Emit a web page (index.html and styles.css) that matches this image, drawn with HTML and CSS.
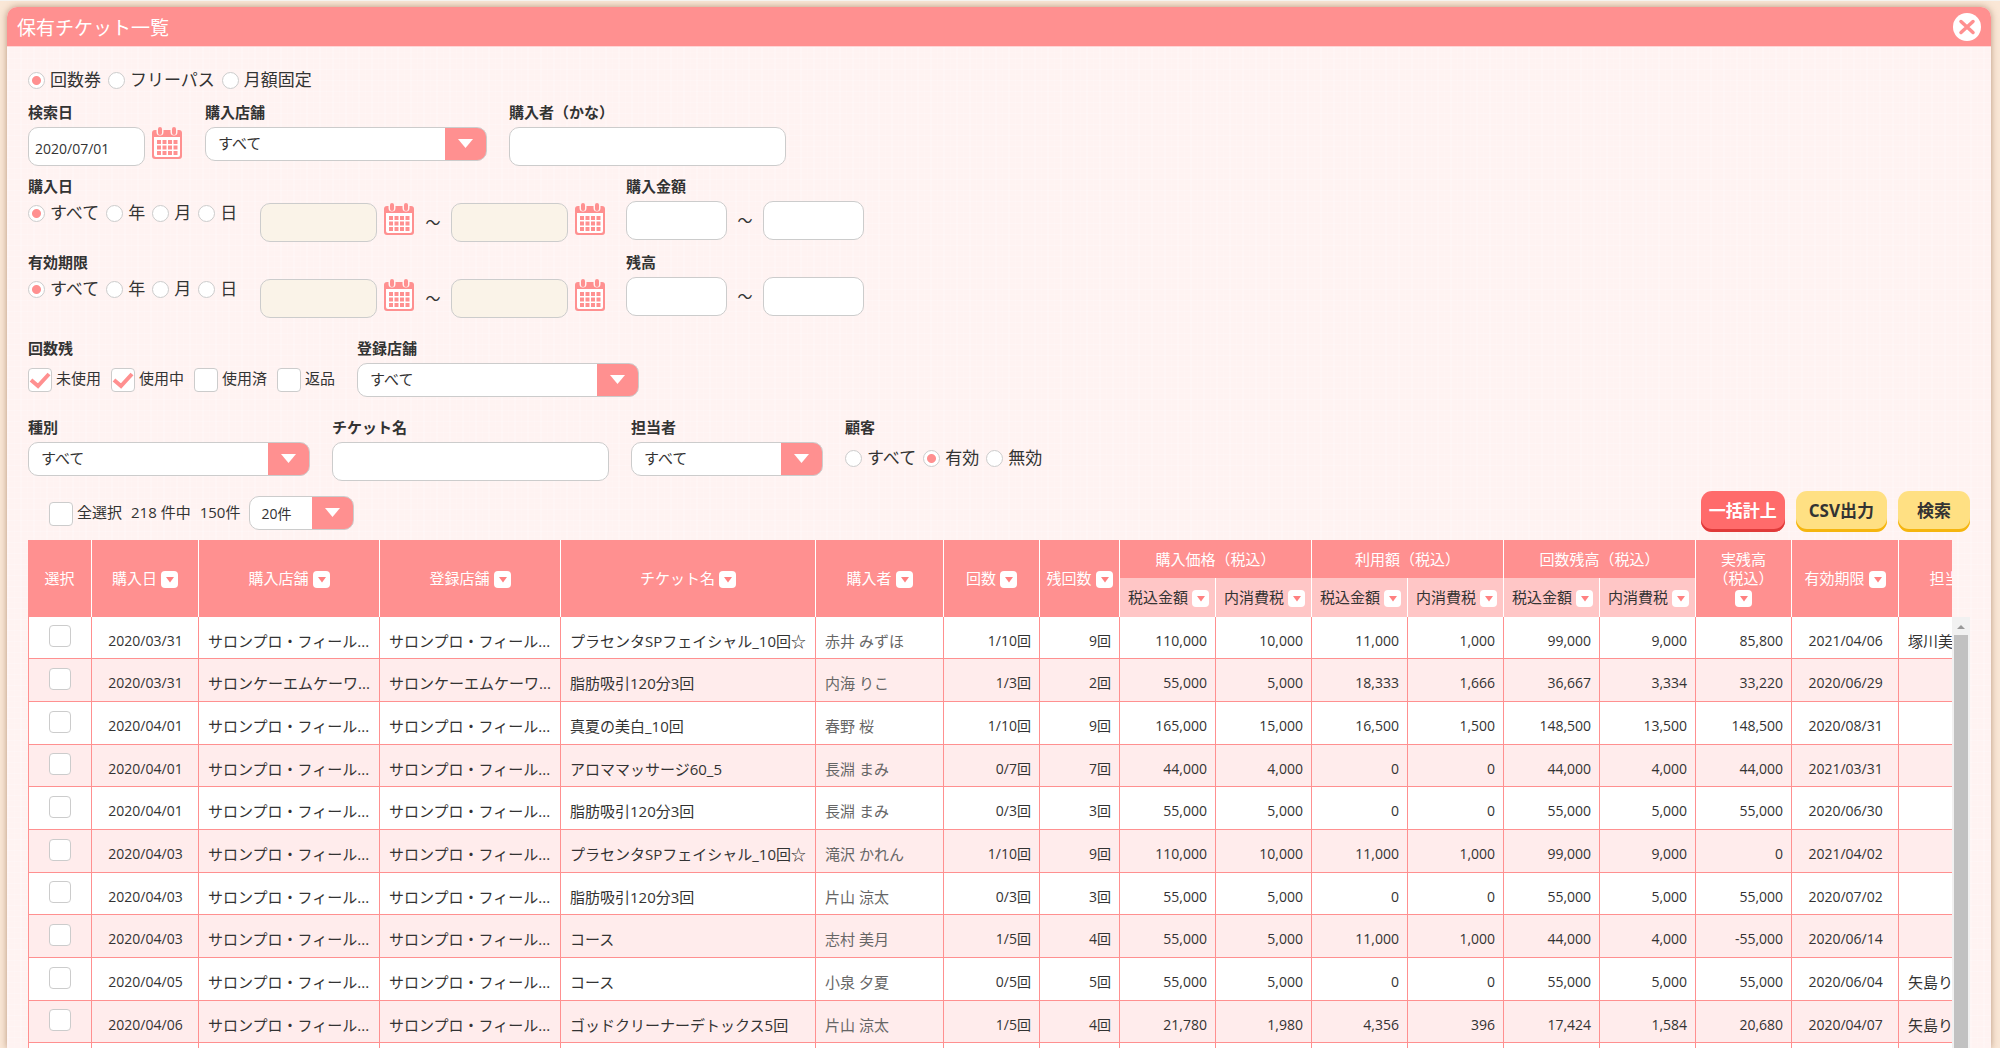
FILE: index.html
```html
<!DOCTYPE html>
<html lang="ja">
<head>
  <meta charset="UTF-8">
  <meta name="viewport" content="width=device-width, initial-scale=1.0">
  <title>保有チケット一覧</title>
  <link rel="stylesheet" href="styles.css">
</head>
<body>

<!-- shared icons -->
<svg class="defs" width="0" height="0" aria-hidden="true">
  <symbol id="icon-calendar" viewBox="0 0 32 32">
    <path fill="#ff9090" d="M4 3h24a3 3 0 0 1 3 3v23a3 3 0 0 1-3 3H4a3 3 0 0 1-3-3V6a3 3 0 0 1 3-3z"/>
    <path fill="#fff" d="M3 10h26v18a2 2 0 0 1-2 2H5a2 2 0 0 1-2-2z"/>
    <path stroke="#fff4f3" stroke-width="7" stroke-linecap="round" d="M9 3v2M23 3v2"/>
    <path stroke="#ff9090" stroke-width="4" stroke-linecap="round" d="M9 2v4M23 2v4"/>
    <path stroke="#ff9090" stroke-width="4" stroke-dasharray="4 1.500" d="M6 15h20.500M6 20.500h20.500M6 26h20.500"/>
  </symbol>
  <symbol id="icon-sort" viewBox="0 0 17 17">
    <path fill="#ff8080" d="M5 6h8l-4 5.500z"/>
  </symbol>
</svg>

<div class="modal">
  <header class="modal-header">
    <h1>保有チケット一覧</h1>
    <button type="button" class="close" aria-label="閉じる">
      <svg width="28" height="28" viewBox="0 0 28 28">
        <circle cx="14" cy="14" r="14" fill="#fff"/>
        <path d="M8 8.500l12 11M20 8.500l-12 11" stroke="#ff9090" stroke-width="3.500" stroke-linecap="round"/>
      </svg>
    </button>
  </header>

  <main class="modal-body">
    <form class="search">
      <div class="radios">
        <label><input type="radio" name="kind" checked>回数券</label>
        <label><input type="radio" name="kind">フリーパス</label>
        <label><input type="radio" name="kind">月額固定</label>
      </div>

      <div class="row">
        <div class="field">
          <label class="caption" for="searchDate">検索日</label>
          <div class="inline">
            <input type="text" class="text date" id="searchDate" value="2020/07/01">
            <button type="button" class="cal" aria-label="カレンダー"><svg><use href="#icon-calendar"/></svg></button>
          </div>
        </div>
        <div class="field">
          <label class="caption" for="buyShop">購入店舗</label>
          <select class="select" id="buyShop"><option>すべて</option></select>
        </div>
        <div class="field">
          <label class="caption" for="buyerKana">購入者（かな）</label>
          <input type="text" class="text wide" id="buyerKana">
        </div>
      </div>

      <div class="row">
        <div class="field period">
          <span class="caption">購入日</span>
          <div class="inline">
            <div class="radios">
              <label><input type="radio" name="buyDate" checked>すべて</label>
              <label><input type="radio" name="buyDate">年</label>
              <label><input type="radio" name="buyDate">月</label>
              <label><input type="radio" name="buyDate">日</label>
            </div>
            <div class="range">
              <input type="text" class="text date" aria-label="購入日 開始" disabled>
              <button type="button" class="cal" aria-label="カレンダー"><svg><use href="#icon-calendar"/></svg></button>
              <span class="tilde">～</span>
              <input type="text" class="text date" aria-label="購入日 終了" disabled>
              <button type="button" class="cal" aria-label="カレンダー"><svg><use href="#icon-calendar"/></svg></button>
            </div>
          </div>
        </div>
        <div class="field">
          <label class="caption" for="priceFrom">購入金額</label>
          <div class="inline">
            <input type="text" class="text amount" id="priceFrom">
            <span class="tilde">～</span>
            <input type="text" class="text amount" aria-label="購入金額 上限">
          </div>
        </div>
      </div>

      <div class="row">
        <div class="field period">
          <span class="caption">有効期限</span>
          <div class="inline">
            <div class="radios">
              <label><input type="radio" name="limitDate" checked>すべて</label>
              <label><input type="radio" name="limitDate">年</label>
              <label><input type="radio" name="limitDate">月</label>
              <label><input type="radio" name="limitDate">日</label>
            </div>
            <div class="range">
              <input type="text" class="text date" aria-label="有効期限 開始" disabled>
              <button type="button" class="cal" aria-label="カレンダー"><svg><use href="#icon-calendar"/></svg></button>
              <span class="tilde">～</span>
              <input type="text" class="text date" aria-label="有効期限 終了" disabled>
              <button type="button" class="cal" aria-label="カレンダー"><svg><use href="#icon-calendar"/></svg></button>
            </div>
          </div>
        </div>
        <div class="field">
          <label class="caption" for="balanceFrom">残高</label>
          <div class="inline">
            <input type="text" class="text amount" id="balanceFrom">
            <span class="tilde">～</span>
            <input type="text" class="text amount" aria-label="残高 上限">
          </div>
        </div>
      </div>

      <div class="row spaced">
        <div class="field">
          <span class="caption">回数残</span>
          <div class="checks">
            <label><input type="checkbox" class="check" checked>未使用</label>
            <label><input type="checkbox" class="check" checked>使用中</label>
            <label><input type="checkbox" class="check">使用済</label>
            <label><input type="checkbox" class="check">返品</label>
          </div>
        </div>
        <div class="field">
          <label class="caption" for="regShop">登録店舗</label>
          <select class="select" id="regShop"><option>すべて</option></select>
        </div>
      </div>

      <div class="row spaced">
        <div class="field">
          <label class="caption" for="type">種別</label>
          <select class="select" id="type"><option>すべて</option></select>
        </div>
        <div class="field">
          <label class="caption" for="ticketName">チケット名</label>
          <input type="text" class="text wide" id="ticketName">
        </div>
        <div class="field">
          <label class="caption" for="staff">担当者</label>
          <select class="select medium" id="staff"><option>すべて</option></select>
        </div>
        <div class="field customer">
          <span class="caption">顧客</span>
          <div class="radios">
            <label><input type="radio" name="customer">すべて</label>
            <label><input type="radio" name="customer" checked>有効</label>
            <label><input type="radio" name="customer">無効</label>
          </div>
        </div>
      </div>

      <div class="toolbar">
        <label class="all"><input type="checkbox" class="check">全選択</label>
        <span>218 件中</span>
        <span>150件</span>
        <select class="select small" aria-label="表示件数"><option>20件</option></select>
        <div class="buttons">
          <button type="button" class="btn red">一括計上</button>
          <button type="button" class="btn">CSV出力</button>
          <button type="button" class="btn">検索</button>
        </div>
      </div>
    </form>

    <div class="list">
      <div class="table-wrap">
        <table>
          <colgroup>
            <col class="w64"><col class="w107"><col class="w181"><col class="w181"><col class="w255"><col class="w128">
            <col class="w96"><col class="w80"><col class="w96"><col class="w96"><col class="w96"><col class="w96">
            <col class="w96"><col class="w96"><col class="w96"><col class="w107"><col class="w128">
          </colgroup>
          <thead>
            <tr>
              <th rowspan="2">選択</th>
              <th rowspan="2">購入日<button type="button" class="sort" aria-label="並び替え"><svg><use href="#icon-sort"/></svg></button></th>
              <th rowspan="2">購入店舗<button type="button" class="sort" aria-label="並び替え"><svg><use href="#icon-sort"/></svg></button></th>
              <th rowspan="2">登録店舗<button type="button" class="sort" aria-label="並び替え"><svg><use href="#icon-sort"/></svg></button></th>
              <th rowspan="2">チケット名<button type="button" class="sort" aria-label="並び替え"><svg><use href="#icon-sort"/></svg></button></th>
              <th rowspan="2">購入者<button type="button" class="sort" aria-label="並び替え"><svg><use href="#icon-sort"/></svg></button></th>
              <th rowspan="2">回数<button type="button" class="sort" aria-label="並び替え"><svg><use href="#icon-sort"/></svg></button></th>
              <th rowspan="2">残回数<button type="button" class="sort" aria-label="並び替え"><svg><use href="#icon-sort"/></svg></button></th>
              <th colspan="2">購入価格（税込）</th>
              <th colspan="2">利用額（税込）</th>
              <th colspan="2">回数残高（税込）</th>
              <th rowspan="2" class="stack">実残高<br>（税込）<br><button type="button" class="sort" aria-label="並び替え"><svg><use href="#icon-sort"/></svg></button></th>
              <th rowspan="2">有効期限<button type="button" class="sort" aria-label="並び替え"><svg><use href="#icon-sort"/></svg></button></th>
              <th rowspan="2">担当者<button type="button" class="sort" aria-label="並び替え"><svg><use href="#icon-sort"/></svg></button></th>
            </tr>
            <tr class="sub">
              <th>税込金額<button type="button" class="sort" aria-label="並び替え"><svg><use href="#icon-sort"/></svg></button></th>
              <th>内消費税<button type="button" class="sort" aria-label="並び替え"><svg><use href="#icon-sort"/></svg></button></th>
              <th>税込金額<button type="button" class="sort" aria-label="並び替え"><svg><use href="#icon-sort"/></svg></button></th>
              <th>内消費税<button type="button" class="sort" aria-label="並び替え"><svg><use href="#icon-sort"/></svg></button></th>
              <th>税込金額<button type="button" class="sort" aria-label="並び替え"><svg><use href="#icon-sort"/></svg></button></th>
              <th>内消費税<button type="button" class="sort" aria-label="並び替え"><svg><use href="#icon-sort"/></svg></button></th>
            </tr>
          </thead>
          <tbody>
            <tr>
              <td class="sel"><input type="checkbox" class="check" aria-label="選択"></td><td class="day">2020/03/31</td>
              <td>サロンプロ・フィール...</td><td>サロンプロ・フィール...</td><td>プラセンタSPフェイシャル_10回☆</td><td class="name">赤井 みずほ</td>
              <td class="num">1/10回</td><td class="num">9回</td><td class="num">110,000</td><td class="num">10,000</td><td class="num">11,000</td><td class="num">1,000</td>
              <td class="num">99,000</td><td class="num">9,000</td><td class="num">85,800</td><td class="day">2021/04/06</td><td>塚川美</td>
            </tr>
            <tr>
              <td class="sel"><input type="checkbox" class="check" aria-label="選択"></td><td class="day">2020/03/31</td>
              <td>サロンケーエムケーワ...</td><td>サロンケーエムケーワ...</td><td>脂肪吸引120分3回</td><td class="name">内海 りこ</td>
              <td class="num">1/3回</td><td class="num">2回</td><td class="num">55,000</td><td class="num">5,000</td><td class="num">18,333</td><td class="num">1,666</td>
              <td class="num">36,667</td><td class="num">3,334</td><td class="num">33,220</td><td class="day">2020/06/29</td><td></td>
            </tr>
            <tr>
              <td class="sel"><input type="checkbox" class="check" aria-label="選択"></td><td class="day">2020/04/01</td>
              <td>サロンプロ・フィール...</td><td>サロンプロ・フィール...</td><td>真夏の美白_10回</td><td class="name">春野 桜</td>
              <td class="num">1/10回</td><td class="num">9回</td><td class="num">165,000</td><td class="num">15,000</td><td class="num">16,500</td><td class="num">1,500</td>
              <td class="num">148,500</td><td class="num">13,500</td><td class="num">148,500</td><td class="day">2020/08/31</td><td></td>
            </tr>
            <tr>
              <td class="sel"><input type="checkbox" class="check" aria-label="選択"></td><td class="day">2020/04/01</td>
              <td>サロンプロ・フィール...</td><td>サロンプロ・フィール...</td><td>アロママッサージ60_5</td><td class="name">長淵 まみ</td>
              <td class="num">0/7回</td><td class="num">7回</td><td class="num">44,000</td><td class="num">4,000</td><td class="num">0</td><td class="num">0</td>
              <td class="num">44,000</td><td class="num">4,000</td><td class="num">44,000</td><td class="day">2021/03/31</td><td></td>
            </tr>
            <tr>
              <td class="sel"><input type="checkbox" class="check" aria-label="選択"></td><td class="day">2020/04/01</td>
              <td>サロンプロ・フィール...</td><td>サロンプロ・フィール...</td><td>脂肪吸引120分3回</td><td class="name">長淵 まみ</td>
              <td class="num">0/3回</td><td class="num">3回</td><td class="num">55,000</td><td class="num">5,000</td><td class="num">0</td><td class="num">0</td>
              <td class="num">55,000</td><td class="num">5,000</td><td class="num">55,000</td><td class="day">2020/06/30</td><td></td>
            </tr>
            <tr>
              <td class="sel"><input type="checkbox" class="check" aria-label="選択"></td><td class="day">2020/04/03</td>
              <td>サロンプロ・フィール...</td><td>サロンプロ・フィール...</td><td>プラセンタSPフェイシャル_10回☆</td><td class="name">滝沢 かれん</td>
              <td class="num">1/10回</td><td class="num">9回</td><td class="num">110,000</td><td class="num">10,000</td><td class="num">11,000</td><td class="num">1,000</td>
              <td class="num">99,000</td><td class="num">9,000</td><td class="num">0</td><td class="day">2021/04/02</td><td></td>
            </tr>
            <tr>
              <td class="sel"><input type="checkbox" class="check" aria-label="選択"></td><td class="day">2020/04/03</td>
              <td>サロンプロ・フィール...</td><td>サロンプロ・フィール...</td><td>脂肪吸引120分3回</td><td class="name">片山 涼太</td>
              <td class="num">0/3回</td><td class="num">3回</td><td class="num">55,000</td><td class="num">5,000</td><td class="num">0</td><td class="num">0</td>
              <td class="num">55,000</td><td class="num">5,000</td><td class="num">55,000</td><td class="day">2020/07/02</td><td></td>
            </tr>
            <tr>
              <td class="sel"><input type="checkbox" class="check" aria-label="選択"></td><td class="day">2020/04/03</td>
              <td>サロンプロ・フィール...</td><td>サロンプロ・フィール...</td><td>コース</td><td class="name">志村 美月</td>
              <td class="num">1/5回</td><td class="num">4回</td><td class="num">55,000</td><td class="num">5,000</td><td class="num">11,000</td><td class="num">1,000</td>
              <td class="num">44,000</td><td class="num">4,000</td><td class="num">-55,000</td><td class="day">2020/06/14</td><td></td>
            </tr>
            <tr>
              <td class="sel"><input type="checkbox" class="check" aria-label="選択"></td><td class="day">2020/04/05</td>
              <td>サロンプロ・フィール...</td><td>サロンプロ・フィール...</td><td>コース</td><td class="name">小泉 夕夏</td>
              <td class="num">0/5回</td><td class="num">5回</td><td class="num">55,000</td><td class="num">5,000</td><td class="num">0</td><td class="num">0</td>
              <td class="num">55,000</td><td class="num">5,000</td><td class="num">55,000</td><td class="day">2020/06/04</td><td>矢島り</td>
            </tr>
            <tr>
              <td class="sel"><input type="checkbox" class="check" aria-label="選択"></td><td class="day">2020/04/06</td>
              <td>サロンプロ・フィール...</td><td>サロンプロ・フィール...</td><td>ゴッドクリーナーデトックス5回</td><td class="name">片山 涼太</td>
              <td class="num">1/5回</td><td class="num">4回</td><td class="num">21,780</td><td class="num">1,980</td><td class="num">4,356</td><td class="num">396</td>
              <td class="num">17,424</td><td class="num">1,584</td><td class="num">20,680</td><td class="day">2020/04/07</td><td>矢島り</td>
            </tr>
            <tr>
              <td></td><td></td><td></td><td></td><td></td><td></td><td></td><td></td><td></td>
              <td></td><td></td><td></td><td></td><td></td><td></td><td></td><td></td>
            </tr>
          </tbody>
        </table>
      </div>
      <div class="scrollbar" aria-hidden="true">
        <svg class="up" viewBox="0 0 18 18"><path fill="#999" d="M5 12l4-4 4 4z"/></svg>
        <div class="thumb"></div>
      </div>
    </div>
  </main>
</div>

</body>
</html>
```

FILE: styles.css
```css
* {
    box-sizing: border-box;
}

body, h1, label, input, select, button {
    margin: 0;
    padding: 0;
    font-family: "Open Sans", "Noto Sans CJK JP", sans-serif;
}

body {
    height: 100vh;
    padding: 6px 9px 0 7px;
    overflow: hidden;
    color: #333;
    font-size: 15px;
    background-color: #fae7d6;
    border-top: 1px solid #f5f3f0;
}

button {
    border: none;
    background: none;
    cursor: pointer;
}

.defs {
    position: absolute;
}

/* Modal */
.modal {
    height: 100%;
    display: flex;
    flex-direction: column;
    border-radius: 10px 10px 0 0;
    overflow: hidden;
    box-shadow: 0 0 7px rgba(120, 70, 40, 0.5);
    background-color: #fff3f2;
}

.modal-header {
    display: flex;
    flex: none;
    justify-content: space-between;
    align-items: center;
    height: 39px;
    padding: 0 10px;
    background-color: #ff9090;
    color: #fff;
}

.modal-header h1 {
    font-size: 19px;
    font-weight: normal;
}

.close svg {
    display: block;
}

/* woven cloth look */
.modal-body {
    flex: 1;
    display: flex;
    flex-direction: column;
    min-height: 0;
    padding: 21px 21px 0;
    border-top: 1px solid #ffd5d5;
    background-image:
        repeating-linear-gradient(90deg, rgba(255, 255, 255, 0.2) 0 2px, transparent 2px 7px, rgba(255, 255, 255, 0.1) 7px 8px, transparent 8px 13px),
        repeating-linear-gradient(rgba(255, 255, 255, 0.2) 0 1px, transparent 1px 5px, rgba(255, 255, 255, 0.1) 5px 6px, transparent 6px 11px);
}

/* Search form */
.search {
    display: flex;
    flex-direction: column;
    gap: 10px;
}

.row {
    display: flex;
    gap: 22px;
}

.spaced {
    margin-top: 10px;
}

.caption {
    display: block;
    height: 20px;
    margin-bottom: 5px;
    line-height: 20px;
    font-size: 15px;
    font-weight: bold;
}

.inline {
    display: flex;
    align-items: flex-start;
}

.radios {
    display: flex;
    gap: 7px;
    height: 24px;
    font-size: 17px;
    line-height: 24px;
}

.radios label {
    display: flex;
    align-items: center;
    gap: 5px;
}

.radios input {
    appearance: none;
    width: 17px;
    height: 17px;
    border: 1px solid #ccc;
    border-radius: 50%;
    background-color: #fff;
}

.radios input:checked {
    background-image: radial-gradient(circle, #ff9090 4px, transparent 5px);
}

.text {
    height: 39px;
    padding: 3px 6px 0;
    border: 1px solid #ccc;
    border-radius: 10px;
    background-color: #fff;
    color: #333;
    font-size: 14px;
}

.text:disabled {
    background-color: #faf3e8;
}

.date {
    width: 117px;
}

.wide {
    width: 277px;
}

.amount {
    width: 101px;
}

.cal {
    width: 32px;
    height: 32px;
    margin-left: 6px;
}

.cal svg {
    display: block;
    width: 32px;
    height: 32px;
}

.tilde {
    width: 36px;
    line-height: 39px;
    text-align: center;
}

.period {
    width: 578px;
    margin-right: -2px;
}

.period .inline {
    justify-content: space-between;
}

.range {
    display: flex;
    align-items: flex-start;
    padding-top: 2px;
}

.customer .radios {
    margin-top: 9px;
}

.select {
    appearance: none;
    width: 282px;
    height: 34px;
    padding: 0 50px 2px 12px;
    border: 1px solid #ccc;
    border-radius: 10px;
    background: #fff url("data:image/svg+xml,%3Csvg xmlns='http://www.w3.org/2000/svg' width='41' height='34'%3E%3Crect width='41' height='34' fill='%23ff9090'/%3E%3Cpath d='M13 12h15l-7.500 9z' fill='%23fff'/%3E%3C/svg%3E") no-repeat right center;
    color: #333;
    font-size: 15px;
}

.medium {
    width: 192px;
}

.small {
    width: 105px;
    padding: 0 42px 0 11px;
    font-size: 14px;
}

.check {
    appearance: none;
    flex: none;
    width: 24px;
    height: 24px;
    border: 1px solid #ccc;
    border-radius: 4px;
    background-color: #fff;
}

.check:checked {
    background-image: url("data:image/svg+xml,%3Csvg xmlns='http://www.w3.org/2000/svg' width='22' height='22'%3E%3Cpath d='M2 11l7 6L20 5' fill='none' stroke='%23ff9090' stroke-width='4'/%3E%3C/svg%3E");
}

.checks {
    display: flex;
    gap: 10px;
    padding-top: 5px;
}

.checks label, .all {
    display: flex;
    gap: 4px;
    line-height: 20px;
}

/* Toolbar above the table */
.toolbar {
    display: flex;
    align-items: flex-start;
    height: 49px;
    padding-left: 21px;
    gap: 9px;
}

.toolbar .all, .toolbar span {
    padding-top: 11px;
    line-height: 20px;
}

.toolbar .select {
    margin-top: 5px;
}

.buttons {
    display: flex;
    gap: 11px;
    margin-left: auto;
}

.btn {
    height: 41px;
    padding: 0 13px 4px;
    border-radius: 11px;
    background-color: #ffe083;
    box-shadow: inset 0 -3px 0 #f5b50f;
    color: #333;
    font-size: 17px;
    font-weight: bold;
}

.btn:last-child {
    padding: 0 19px 4px;
}

.btn.red {
    padding: 0 8px 4px;
    background-color: #ff6b6b;
    box-shadow: inset 0 -3px 0 #e03a3a;
    color: #fff;
}

/* Ticket table */
.list {
    display: flex;
    flex: 1;
    min-height: 0;
}

.table-wrap {
    flex: 1;
    min-width: 0;
    overflow: hidden;
}

table {
    width: 100%;
    table-layout: fixed;
    border-collapse: separate;
    border-spacing: 0;
}

.w64 { width: 64px; }
.w80 { width: 80px; }
.w96 { width: 96px; }
.w107 { width: 107px; }
.w128 { width: 128px; }
.w181 { width: 181px; }
.w255 { width: 255px; }

th {
    height: 38px;
    padding: 0;
    border-right: 1px solid #fff;
    background-color: #ff9090;
    color: #fff;
    font-size: 15px;
    font-weight: normal;
    line-height: 19px;
    white-space: nowrap;
}

.sub th {
    height: 39px;
    padding-left: 2px;
    background-color: #ffc6c6;
    color: #333;
}

.sort {
    width: 17px;
    height: 17px;
    margin-left: 4px;
    border-radius: 4px;
    background-color: #fff;
    vertical-align: middle;
}

.sort svg {
    display: block;
    width: 17px;
    height: 17px;
}

.stack .sort {
    margin-left: 0;
}

td {
    height: 43px;
    padding: 6px 8px 0 9px;
    border-right: 1px solid #ff9090;
    border-bottom: 1px solid #ff9090;
    background-color: #fff;
    font-size: 15px;
    line-height: 20px;
    white-space: nowrap;
    overflow: hidden;
}

td:first-child {
    border-left: 1px solid #ff9090;
}

tbody tr:nth-child(3n+1) td {
    height: 42px;
}

tbody tr:nth-child(even) td {
    background-color: #ffecec;
}

.sel {
    padding: 0;
}

.sel .check {
    display: block;
    width: 22px;
    height: 22px;
    margin: 0 auto 3px;
}

.day {
    text-align: center;
    font-size: 14px;
}

.num {
    text-align: right;
    font-size: 14px;
}

.name {
    color: #666;
}

.scrollbar {
    display: flex;
    flex-direction: column;
    width: 18px;
    margin-top: 77px;
    background-color: #f1f1f1;
}

.up {
    flex: none;
    width: 18px;
    height: 18px;
}

.thumb {
    flex: 1;
    margin: 0 2px;
    background-color: #c1c1c1;
}
```
